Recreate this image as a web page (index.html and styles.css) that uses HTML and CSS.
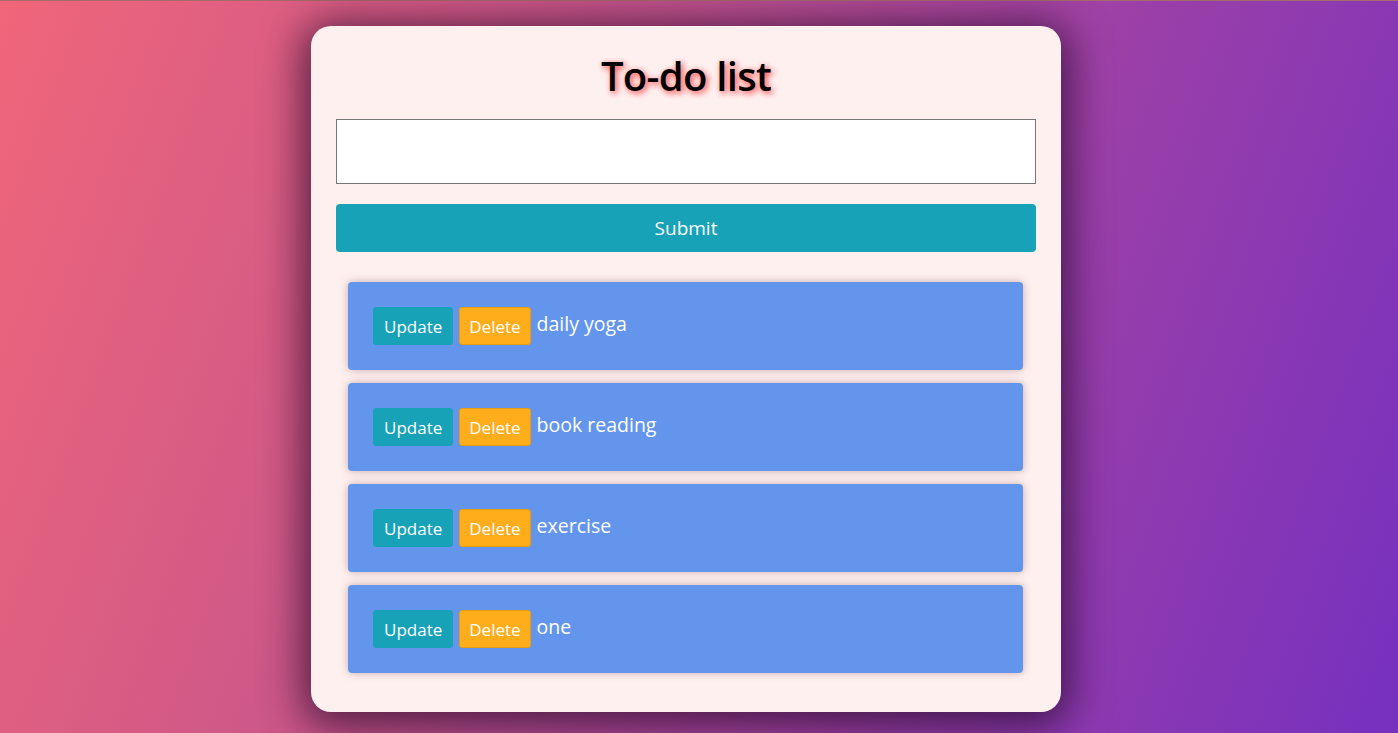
FILE: index.html
```html
<!DOCTYPE html>
<html lang="en">
<head>
<meta charset="utf-8">
<title>To-do list</title>
<link rel="stylesheet" href="styles.css">
</head>
<body>
<div class="topline"></div>
<main class="card">
  <h1 class="title">To-do list</h1>
  <input class="task-input" type="text">
  <button class="submit">Submit</button>
  <ul class="list">
    <li class="item"><button class="btn btn-update">Update</button><button class="btn btn-delete">Delete</button><span class="label">daily yoga</span></li>
    <li class="item"><button class="btn btn-update">Update</button><button class="btn btn-delete">Delete</button><span class="label">book reading</span></li>
    <li class="item"><button class="btn btn-update">Update</button><button class="btn btn-delete">Delete</button><span class="label">exercise</span></li>
    <li class="item"><button class="btn btn-update">Update</button><button class="btn btn-delete">Delete</button><span class="label">one</span></li>
  </ul>
</main>
</body>
</html>
```
FILE: styles.css
```css
* { box-sizing: border-box; }
html, body { margin: 0; height: 100%; }
body {
  background: linear-gradient(110deg, #f0667a 0%, #c4548c 40%, #9a3fa9 70%, #7630bf 100%);
  font-family: "Open Sans", "Noto Sans", sans-serif;
  overflow: hidden;
}
.topline { height: 1px; background: #a56a6a; }
.card {
  width: 750px;
  margin: 25px 0 0 calc(50% - 388px);
  padding: 22px 25px 39px;
  background: #fff0f0;
  border-radius: 20px;
  box-shadow: 0 6px 40px 8px rgba(30, 5, 35, 0.7);
  display: flex;
  flex-direction: column;
}
.title {
  margin: 0 0 15px;
  text-align: center;
  font-size: 40px;
  line-height: 56px;
  font-weight: 600;
  color: #000;
  letter-spacing: -0.7px;
  text-shadow: 2px 2px 6px rgba(255, 20, 20, 0.85);
}
.task-input {
  height: 65px;
  border: 1px solid #767676;
  background: #fff;
  margin: 0 0 20px;
  font-size: 20px;
}
.submit {
  height: 48px;
  border: none;
  border-radius: 4px;
  background: #17a2b8;
  color: #fff;
  font-family: inherit;
  font-size: 19px;
}
.list {
  list-style: none;
  margin: 30px 13px 0 12px;
  padding: 0;
  display: flex;
  flex-direction: column;
  gap: 13px;
}
.item {
  height: 88px;
  padding: 25px;
  background: #6495ed;
  border-radius: 4px;
  box-shadow: 0 0 9px rgba(90, 50, 50, 0.35);
  display: flex;
  align-items: flex-start;
  gap: 6px;
}
.btn {
  height: 38px;
  padding: 0 10px;
  border-radius: 3px;
  color: #fff;
  font-family: inherit;
  font-size: 17px;
}
.btn-update { background: #17a2b8; border: 1px solid #17a2b8; }
.btn-delete { background: #ffad1a; border: 1px solid #e89c10; padding: 0 9px; }
.label {
  color: #fff;
  font-size: 19.5px;
  line-height: 34px;
}
```
